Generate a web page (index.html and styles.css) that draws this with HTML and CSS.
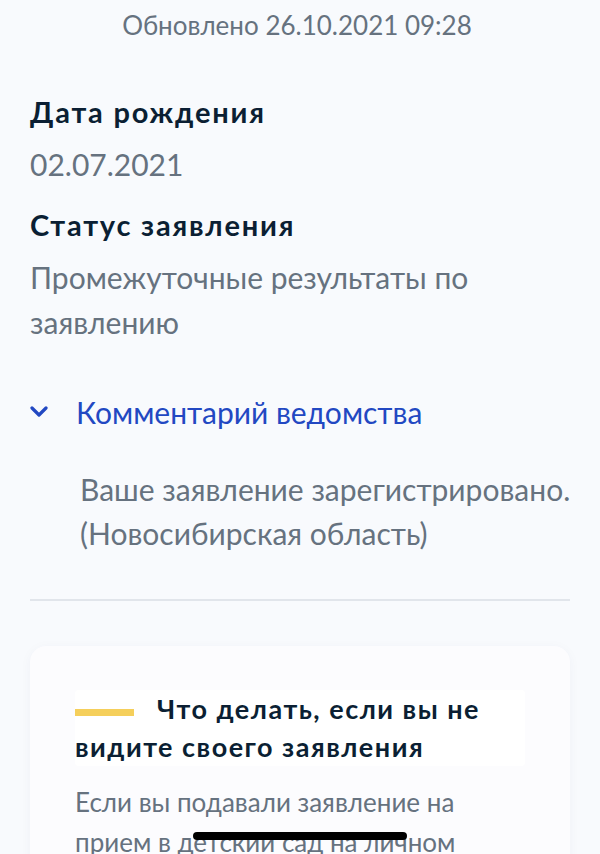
FILE: index.html
```html
<!DOCTYPE html>
<html lang="ru">
<head>
    <meta charset="UTF-8">
    <meta name="viewport" content="width=device-width, initial-scale=1.0">
    <title>Заявление</title>
    <link rel="stylesheet" href="styles.css">
</head>
<body>
    <div class="updated">Обновлено 26.10.2021 09:28</div>

    <section class="details">
        <div class="field">
            <h3>Дата рождения</h3>
            <p>02.07.2021</p>
        </div>
        <div class="field">
            <h3>Статус заявления</h3>
            <p>Промежуточные результаты по заявлению</p>
        </div>

        <!-- Department comment, expanded -->
        <div class="comment">
            <div class="comment-toggle">
                <svg class="chevron" width="18" height="12" viewBox="0 0 18 12">
                    <polyline points="2,2 9,9 16,2" fill="none" stroke="currentColor" stroke-width="3.2" stroke-linecap="round" stroke-linejoin="round"/>
                </svg>
                <span>Комментарий ведомства</span>
            </div>
            <p class="comment-text">Ваше заявление зарегистрировано.<br>(Новосибирская область)</p>
        </div>
    </section>

    <hr class="divider">

    <div class="card">
        <div class="card-title">
            <span class="bar"></span>Что делать, если вы не видите своего заявления
        </div>
        <p>Если вы подавали заявление на прием в детский сад на личном приеме в органе управления образованием, оно может не отображаться в личном кабинете.</p>
    </div>

    <div class="home-indicator"></div>
</body>
</html>
```

FILE: styles.css
```css
:root {
    --bg-color: #f8fafd;
    --text-color: #0b1f33;
    --muted-color: #66727f;
    --link-color: #2248c2;
    --line-color: #e1e5eb;
    --accent-color: #f5cf5b;
}

body {
    margin: 0;
    font-family: Lato, "Noto Sans", sans-serif;
    background-color: var(--bg-color);
    color: var(--text-color);
    overflow: hidden;
}

.updated {
    text-align: center;
    font-size: 26px;
    line-height: 30px;
    padding-top: 10px;
    padding-right: 6px;
    color: var(--muted-color);
}

.details {
    padding: 52px 30px 0;
}

.field {
    margin-bottom: 18px;
}

.field h3 {
    margin: 0;
    font-size: 29px;
    line-height: 40px;
    font-weight: 700;
    letter-spacing: 1.8px;
}

.field p {
    margin: 10px 0 0;
    font-size: 30px;
    line-height: 45px;
    color: var(--muted-color);
}

.comment {
    padding-top: 29px;
}

.comment-toggle {
    display: flex;
    align-items: center;
    gap: 28px;
    color: var(--link-color);
    font-size: 30px;
    line-height: 40px;
}

.chevron {
    flex-shrink: 0;
}

.comment-text {
    margin: 35px -20px 0 0;
    padding-left: 50px;
    font-size: 30px;
    line-height: 44px;
    white-space: nowrap;
    color: var(--muted-color);
}

.divider {
    margin: 44px 30px 0;
    border: none;
    height: 2px;
    background-color: var(--line-color);
}

/* Help card */
.card {
    margin: 45px 30px 0;
    padding: 44px 45px;
    background-color: #fcfcfe;
    border-radius: 16px;
    box-shadow: 0 2px 12px rgba(40, 60, 100, 0.04);
}

.card-title {
    background-color: #ffffff;
    padding-right: 20px;
    font-size: 27px;
    line-height: 38px;
    font-weight: 700;
    letter-spacing: 1.5px;
    border-radius: 4px;
}

.bar {
    display: inline-block;
    width: 59px;
    height: 7px;
    margin-right: 23px;
    vertical-align: middle;
    background-color: var(--accent-color);
}

.card p {
    margin: 16px 0 0;
    font-size: 26px;
    line-height: 40px;
    color: var(--muted-color);
}

.home-indicator {
    position: fixed;
    left: 193px;
    bottom: 14px;
    width: 214px;
    height: 8px;
    border-radius: 4px;
    background-color: #000;
}
```
